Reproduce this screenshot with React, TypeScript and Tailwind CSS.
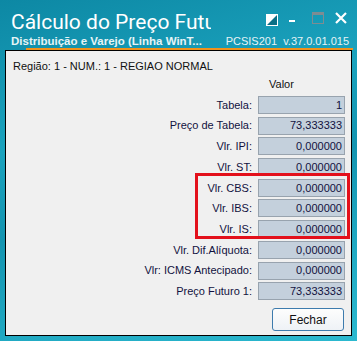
const rows: [string, string][] = [
  ["Tabela:", "1"],
  ["Preço de Tabela:", "73,333333"],
  ["Vlr. IPI:", "0,000000"],
  ["Vlr. ST:", "0,000000"],
  ["Vlr. CBS:", "0,000000"],
  ["Vlr. IBS:", "0,000000"],
  ["Vlr. IS:", "0,000000"],
  ["Vlr. Dif.Alíquota:", "0,000000"],
  ["Vlr: ICMS Antecipado:", "0,000000"],
  ["Preço Futuro 1:", "73,333333"],
]

function TitleButtons() {
  return (
    <div className="flex items-start pt-[12px] pr-[10px]">
      {/* restaurar */}
      <svg width="12" height="12" viewBox="0 0 12 12" className="mt-[2px]">
        <rect x="0.5" y="0.5" width="11" height="11" fill="#0b6f86" stroke="#fff" />
        <polygon points="0,0 12,0 0,12" fill="#fff" />
      </svg>
      {/* minimizar */}
      <svg width="8" height="14" viewBox="0 0 8 14" className="ml-[10px]">
        <rect x="1" y="8" width="6" height="2" fill="#fff" />
      </svg>
      {/* maximizar (desabilitado) */}
      <svg width="12" height="12" viewBox="0 0 12 12" className="ml-[16px]">
        <rect x="0.5" y="0.5" width="11" height="11" fill="none" stroke="#7d8c92" />
        <rect x="0" y="0" width="12" height="3" fill="#7d8c92" />
      </svg>
      {/* fechar */}
      <svg width="12" height="12" viewBox="0 0 12 12" className="ml-[11px]">
        <path d="M1 1 L11 11 M11 1 L1 11" stroke="#fff" strokeWidth="2.2" />
      </svg>
    </div>
  )
}

export default function App() {
  return (
    <div className="w-[357px] h-[341px] overflow-hidden flex flex-col bg-[linear-gradient(165deg,#0d88a4_0%,#1ba3be_35%,#1494b0_55%,#22abc4_80%,#2cb9cf_100%)] font-['Liberation_Sans',Arial,sans-serif]">
      {/* cabeçalho */}
      <div className="h-[50px] shrink-0 flex flex-col">
        <div className="flex justify-between h-[34px]">
          <div className="pl-[11px] pt-[8px] w-[211px] overflow-hidden whitespace-nowrap text-[21px] leading-[28px] text-white font-['Roboto','Liberation_Sans',sans-serif]">
            Cálculo do Preço Futuro
          </div>
          <TitleButtons />
        </div>
        <div className="flex justify-between items-baseline pl-[11px] pr-[8px] leading-[14px] text-[#e6f4f6]">
          <span className="font-bold text-[11.5px]">Distribuição e Varejo (Linha WinT...</span>
          <span className="text-[11px]">PCSIS201&nbsp;&nbsp;v.37.0.01.015</span>
        </div>
        <div className="ml-[26px] mr-[4px] h-[2px] bg-[#f0921c]" />
      </div>

      {/* painel */}
      <div className="ml-[5px] w-[347px] h-[286px] border border-black bg-[#f0f0f0] flex flex-col text-[11px] text-[#121240]">
        <div className="pl-[7px] pt-[8px] leading-[14px] text-[#111]">
          Região: 1 - NUM.: 1 - REGIAO NORMAL
        </div>
        <div className="flex justify-end pr-[6px] mt-[4px] leading-[14px] text-[#111]">
          <span className="w-[87px] pl-[11px]">Valor</span>
        </div>
        <div className="relative mt-[5px] pr-[6px] flex flex-col gap-[2.7px]">
          {rows.map(([label, value]) => (
            <div key={label} className="flex justify-end items-center gap-[6px]">
              <span className="whitespace-nowrap">{label}</span>
              <div className="w-[87px] h-[18px] bg-[#c4d0dc] border border-[#98a3ae] flex items-center justify-end pr-[2px]">
                {value}
              </div>
            </div>
          ))}
          {/* destaque vermelho */}
          <div className="absolute left-[189px] top-[77px] w-[155px] h-[66px] border-[3px] border-[#e3101b] pointer-events-none" />
        </div>
        <div className="flex justify-end pr-[7px] mt-[8px]">
          <button className="w-[72px] h-[23px] rounded-[3px] border border-[#3d7bad] bg-[linear-gradient(#fdfdfd,#eef2f6)] text-[#111] text-[12px]">
            Fechar
          </button>
        </div>
      </div>
    </div>
  )
}
